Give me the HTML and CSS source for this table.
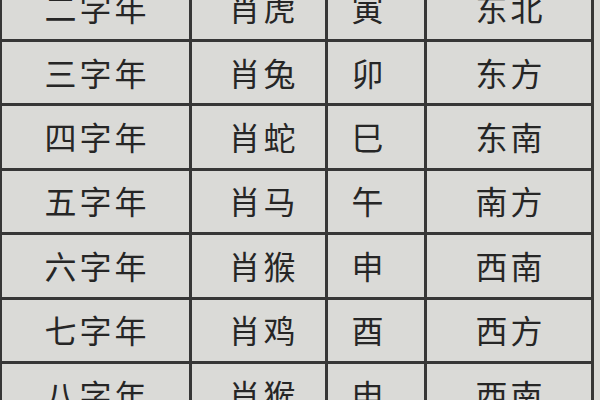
FILE: index.html
```html
<!DOCTYPE html>
<html lang="zh-CN">
<head>
<meta charset="utf-8">
<title>生肖方位表</title>
<link rel="stylesheet" href="styles.css">
</head>
<body>
<div class="paper">
  <div class="table">
    <div class="cell">二字年</div><div class="cell animal">肖虎</div><div class="cell branch">寅</div><div class="cell">东北</div>
    <div class="cell">三字年</div><div class="cell animal">肖兔</div><div class="cell branch">卯</div><div class="cell">东方</div>
    <div class="cell">四字年</div><div class="cell animal">肖蛇</div><div class="cell branch">巳</div><div class="cell">东南</div>
    <div class="cell">五字年</div><div class="cell animal">肖马</div><div class="cell branch">午</div><div class="cell">南方</div>
    <div class="cell">六字年</div><div class="cell animal">肖猴</div><div class="cell branch">申</div><div class="cell">西南</div>
    <div class="cell">七字年</div><div class="cell animal">肖鸡</div><div class="cell branch">酉</div><div class="cell">西方</div>
    <div class="cell">八字年</div><div class="cell animal">肖猴</div><div class="cell branch">申</div><div class="cell">西南</div>
  </div>
</div>
</body>
</html>
```
FILE: styles.css
```css
html, body {
  margin: 0;
  padding: 0;
  background: #d9d9d6;
}
.paper {
  width: 600px;
  height: 400px;
  overflow: hidden;
  background: #d9d9d6;
}
.table {
  display: grid;
  grid-template-columns: 187px 133px 96px 164px;
  grid-auto-rows: 61.4px;
  gap: 3px;
  padding: 3px;
  width: max-content;
  margin-top: -25.4px;
  margin-left: -1px;
  background: #363636;
}
.cell {
  background: #dadad7;
  display: flex;
  align-items: center;
  justify-content: center;
  font-family: "Noto Sans CJK SC", "Noto Sans", sans-serif;
  font-size: 32px;
  letter-spacing: 3px;
  padding-left: 3px;
  padding-bottom: 2px;
  color: #262626;
  line-height: 1;
}
.animal {
  padding-left: 10px;
}
.branch {
  padding-left: 0;
  padding-right: 14px;
}
```
